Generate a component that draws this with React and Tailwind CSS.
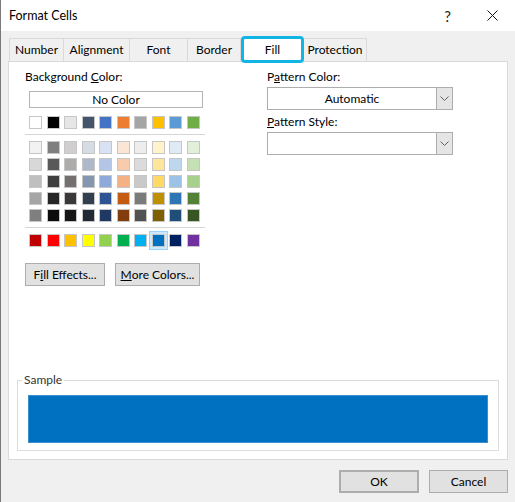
import React from 'react';

const THEME_TOP = ['#FFFFFF', '#000000', '#E7E6E6', '#44546A', '#4472C4', '#ED7D31', '#A5A5A5', '#FFC000', '#5B9BD5', '#70AD47'];

const THEME_TINTS = [
  ['#F2F2F2', '#7F7F7F', '#D0CECE', '#D6DCE4', '#D9E2F3', '#FBE5D5', '#EDEDED', '#FFF2CC', '#DEEBF6', '#E2EFD9'],
  ['#D8D8D8', '#595959', '#AEABAB', '#ADB9CA', '#B4C6E7', '#F7CBAC', '#DBDBDB', '#FEE599', '#BDD7EE', '#C5E0B3'],
  ['#BFBFBF', '#3F3F3F', '#757070', '#8496B0', '#8EAADB', '#F4B183', '#C9C9C9', '#FFD965', '#9CC3E5', '#A8D08D'],
  ['#A5A5A5', '#262626', '#3A3838', '#323F4F', '#2F5496', '#C55A11', '#7B7B7B', '#BF9000', '#2E75B5', '#538135'],
  ['#7F7F7F', '#0C0C0C', '#171616', '#222A35', '#1F3864', '#833C0B', '#525252', '#7F6000', '#1E4E79', '#375623'],
];

const STANDARD = ['#C00000', '#FF0000', '#FFC000', '#FFFF00', '#92D050', '#00B050', '#00B0F0', '#0070C0', '#002060', '#7030A0'];

const TABS = [
  { label: 'Number', w: 'w-[55px]' },
  { label: 'Alignment', w: 'w-[66px]' },
  { label: 'Font', w: 'w-[58px]' },
  { label: 'Border', w: 'w-[53px]' },
  { label: 'Fill', w: 'w-[63px]', active: true },
  { label: 'Protection', w: 'w-[63px]' },
];

const Swatch = ({ color, selected }) => (
  <div className="relative w-[13px] h-[13px]">
    {selected && (
      <div className="absolute -inset-[3px] bg-[#cce8ff] border border-[#99d1ff]" />
    )}
    <div
      className="relative w-[13px] h-[13px] border border-[#c6c6c6]"
      style={{ backgroundColor: color }}
    />
  </div>
);

const SwatchRow = ({ colors, selectedColor }) => (
  <div className="flex gap-x-[4.5px]">
    {colors.map((c, i) => (
      <Swatch key={i} color={c} selected={c === selectedColor} />
    ))}
  </div>
);

const Chevron = () => (
  <svg width="9" height="5" viewBox="0 0 9 5" fill="none">
    <path d="M0.5 0.5 L4.5 4.5 L8.5 0.5" stroke="#606060" strokeWidth="1" />
  </svg>
);

const Select = ({ value }) => (
  <div className="flex h-[23px] w-[186px] border border-[#adadad] bg-white">
    <div className="flex-1 flex items-center justify-center">{value}</div>
    <div className="w-[16px] flex items-center justify-center bg-[#e5e5e5] border-l border-[#adadad]">
      <Chevron />
    </div>
  </div>
);

const Button = ({ children, className = '' }) => (
  <div
    className={`flex items-center justify-center h-[23px] bg-[#e1e1e1] border border-[#adadad] ${className}`}
  >
    {children}
  </div>
);

export default function App() {
  return (
    <div className="w-[515px] h-[502px] bg-[#f0f0f0] flex flex-col border-l border-[#7a7a7a] font-['Lato',sans-serif] text-[12px] leading-[16px] text-black overflow-hidden">
      {/* title bar */}
      <div className="h-[31px] bg-white flex items-center pl-[8px] pr-[17px] shrink-0">
        <span className="text-[12.5px]">Format Cells</span>
        <span className="ml-auto mr-[36px] text-[15px] text-[#222]">?</span>
        <svg width="11" height="11" viewBox="0 0 11 11">
          <path d="M0.5 0.5 L10.5 10.5 M10.5 0.5 L0.5 10.5" stroke="#111" strokeWidth="1" />
        </svg>
      </div>

      {/* tabs */}
      <div className="flex items-end pl-[8px] mt-[5px] h-[25px] shrink-0">
        {TABS.map((t) =>
          t.active ? (
            <div
              key={t.label}
              className={`${t.w} h-[27px] -mb-[2px] relative z-10 bg-white border-[3px] border-[#12b4e4] rounded-[4px] flex items-center justify-center`}
            >
              {t.label}
            </div>
          ) : (
            <div
              key={t.label}
              className={`${t.w} h-[23px] border-t border-r first:border-l border-[#d9d9d9] flex items-center justify-center`}
            >
              {t.label}
            </div>
          )
        )}
      </div>

      {/* panel */}
      <div className="mx-[7px] h-[399px] bg-white border border-[#d9d9d9] flex flex-col pt-[7px] shrink-0">
        <div className="flex">
          {/* left column */}
          <div className="pl-[16px] w-[258px]">
            <div>
              Background <u>C</u>olor:
            </div>
            <div className="ml-[4px] mt-[6px] w-[174px] h-[17px] border border-[#b4b4b4] flex items-center justify-center">
              No Color
            </div>
            <div className="ml-[4px] mt-[8px]">
              <SwatchRow colors={THEME_TOP} />
            </div>
            <div className="mt-[5px] w-[180px] h-px bg-[#d6d6d6]" />
            <div className="ml-[4px] mt-[6px] flex flex-col gap-y-[4px]">
              {THEME_TINTS.map((row, i) => (
                <SwatchRow key={i} colors={row} />
              ))}
            </div>
            <div className="mt-[5px] w-[180px] h-px bg-[#d6d6d6]" />
            <div className="ml-[4px] mt-[6px]">
              <SwatchRow colors={STANDARD} selectedColor="#0070C0" />
            </div>
            <div className="flex gap-[10px] mt-[16px]">
              <Button className="w-[80px]">
                F<u>i</u>ll Effects...
              </Button>
              <Button className="w-[85px]">
                <u>M</u>ore Colors...
              </Button>
            </div>
          </div>

          {/* right column */}
          <div className="flex flex-col">
            <div>
              P<u>a</u>ttern Color:
            </div>
            <div className="mt-[2px]">
              <Select value="Automatic" />
            </div>
            <div className="mt-[4px]">
              <u>P</u>attern Style:
            </div>
            <div className="mt-[2px]">
              <Select value="" />
            </div>
          </div>
        </div>

        {/* sample */}
        <div className="mt-auto mb-[8px] mx-[8px] relative h-[71px] border border-[#dcdcdc] px-[10px] pt-[14px]">
          <span className="absolute -top-[9px] left-[4px] px-[2px] bg-white text-[#333]">Sample</span>
          <div className="h-[48px] bg-[#0070c0] border border-[#3a8fd0]" />
        </div>
      </div>

      {/* footer */}
      <div className="flex justify-end gap-[10px] pr-[7px] mt-[10px]">
        <Button className="w-[80px] border-2 border-[#0078d7]">OK</Button>
        <Button className="w-[79px]">Cancel</Button>
      </div>
    </div>
  );
}
